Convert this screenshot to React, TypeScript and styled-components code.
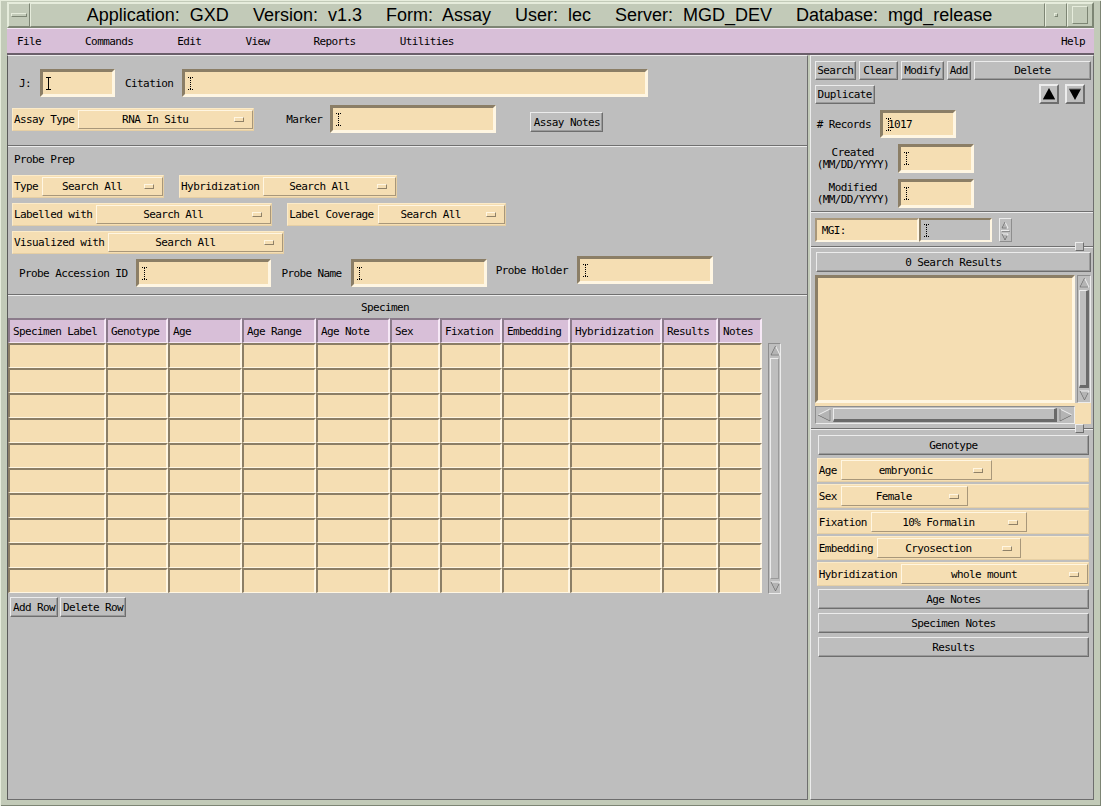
import styled, { createGlobalStyle } from 'styled-components';

// X11 / Motif palette
const C = {
  frame: '#c2cab8',
  frameLight: '#e6ecdc',
  frameDark: '#7d8574',
  gray: '#bebebe',
  grayLight: '#ececec',
  grayDark: '#6e6e6e',
  wheat: '#f5deb3',
  wheatLight: '#fff6e2',
  wheatDark: '#8b7e66',
  thistle: '#d8bfd8',
  thistleDark: '#8b7b8b',
  thistleLight: '#f6e8f6',
};

const GlobalStyle = createGlobalStyle`
  html, body { margin: 0; padding: 0; background: ${C.frame}; }
  body {
    font-family: "DejaVu Sans Mono", "Liberation Mono", monospace;
    font-size: 11px;
    letter-spacing: -0.6px;
    color: #000;
  }
  * { box-sizing: border-box; }
`;

const Window = styled.div`
  width: 1101px;
  height: 806px;
  padding: 2px 7px 6px;
  display: flex;
  flex-direction: column;
  background: ${C.frame};
  box-shadow: inset 1px 1px 0 ${C.frameLight}, inset -1px -1px 0 ${C.frameDark};
`;

/* ---------- title bar ---------- */
const TitleBar = styled.div`
  height: 26px;
  display: flex;
  border: 1px solid;
  border-color: ${C.frameLight} ${C.frameDark} ${C.frameDark} ${C.frameLight};
`;

const TitleButton = styled.div<{ $w: number }>`
  width: ${p => p.$w}px;
  display: flex;
  align-items: center;
  justify-content: center;
  border: 1px solid;
  border-color: ${C.frameLight} ${C.frameDark} ${C.frameDark} ${C.frameLight};
`;

const TitleText = styled.div`
  flex: 1;
  display: flex;
  align-items: center;
  justify-content: center;
  gap: 24px;
  padding-left: 4px;
  font-family: "Liberation Sans", Arial, sans-serif;
  font-size: 18px;
  letter-spacing: 0;
  white-space: pre;
  border: 1px solid;
  border-color: ${C.frameLight} ${C.frameDark} ${C.frameDark} ${C.frameLight};
`;

const MenuGlyph = styled.div`
  width: 16px;
  height: 4px;
  border: 1px solid;
  border-color: ${C.frameLight} ${C.frameDark} ${C.frameDark} ${C.frameLight};
`;

const MinGlyph = styled.div`
  width: 4px;
  height: 4px;
  border: 1px solid;
  border-color: ${C.frameLight} ${C.frameDark} ${C.frameDark} ${C.frameLight};
`;

const MaxGlyph = styled.div`
  width: 16px;
  height: 18px;
  border: 1px solid;
  border-color: ${C.frameLight} ${C.frameDark} ${C.frameDark} ${C.frameLight};
`;

/* ---------- menu bar ---------- */
const MenuBar = styled.div`
  height: 27px;
  display: flex;
  align-items: center;
  gap: 44px;
  padding: 1px 9px 0 10px;
  background: ${C.thistle};
  border-top: 1px solid ${C.thistleLight};
  border-bottom: 2px solid #6a5f6a;
`;

const MenuItem = styled.span<{ $right?: boolean }>`
  margin-left: ${p => (p.$right ? 'auto' : '0')};
`;

/* ---------- main panels ---------- */
const Main = styled.div`
  flex: 1;
  display: flex;
  gap: 2px;
`;

const LeftPanel = styled.div`
  width: 801px;
  display: flex;
  flex-direction: column;
  background: ${C.gray};
  border: 1px solid;
  border-color: ${C.grayLight} ${C.grayDark} ${C.grayDark} #5a5a5a;
`;

const RightPanel = styled.div`
  flex: 1;
  display: flex;
  flex-direction: column;
  background: ${C.gray};
  border: 1px solid;
  border-color: ${C.grayLight} ${C.grayDark} ${C.grayDark} ${C.grayLight};
`;

const Section = styled.div<{ $pad: string; $grow?: boolean }>`
  display: flex;
  flex-direction: column;
  padding: ${p => p.$pad};
  flex: ${p => (p.$grow ? 1 : 'none')};
`;

const Separator = styled.div`
  height: 2px;
  border-top: 1px solid #707070;
  border-bottom: 1px solid ${C.grayLight};
`;

const Sash = styled.div`
  position: relative;
  height: 2px;
  border-top: 1px solid #707070;
  border-bottom: 1px solid ${C.grayLight};
`;

const SashHandle = styled.div`
  position: absolute;
  right: 9px;
  top: -5px;
  width: 9px;
  height: 9px;
  background: ${C.gray};
  border: 1px solid;
  border-color: ${C.grayLight} ${C.grayDark} ${C.grayDark} ${C.grayLight};
`;

const Row = styled.div<{ $mt?: number; $h?: number; $pl?: number; $align?: string }>`
  display: flex;
  align-items: ${p => p.$align ?? 'center'};
  margin-top: ${p => p.$mt ?? 0}px;
  height: ${p => (p.$h ? `${p.$h}px` : 'auto')};
  padding-left: ${p => p.$pl ?? 0}px;
`;

const Label = styled.span<{ $ml?: number; $mr?: number; $w?: number }>`
  margin-left: ${p => p.$ml ?? 0}px;
  margin-right: ${p => p.$mr ?? 0}px;
  width: ${p => (p.$w ? `${p.$w}px` : 'auto')};
  white-space: pre;
  flex: none;
`;

const StackLabel = styled.div`
  width: 72px;
  margin: 0 9px 0 2px;
  text-align: center;
  line-height: 12px;
`;

const Caption = styled.div<{ $center?: boolean; $ml?: number }>`
  height: 12px;
  line-height: 12px;
  margin-left: ${p => p.$ml ?? 0}px;
  text-align: ${p => (p.$center ? 'center' : 'left')};
`;

/* ---------- text fields ---------- */
const Field = styled.div<{ $w: number; $h?: number; $gray?: boolean; $bw?: number }>`
  width: ${p => p.$w}px;
  height: ${p => p.$h ?? 28}px;
  flex: none;
  display: flex;
  align-items: center;
  padding-left: 3px;
  background: ${p => (p.$gray ? C.gray : C.wheat)};
  border: ${p => p.$bw ?? 3}px solid;
  border-color: ${C.wheatDark} ${C.wheatLight} ${C.wheatLight} ${C.wheatDark};
`;

const FieldText = styled.span`
  margin-left: -3px;
`;

const IBeam = ({ dotted }: { dotted?: boolean }) => (
  <svg width="5" height="13" viewBox="0 0 5 13" style={{ flex: 'none' }}>
    <path d="M0 0.5H5M0 12.5H5" stroke="#000" strokeWidth="1" strokeDasharray={dotted ? '1 1' : undefined} />
    <path d="M2.5 1V12" stroke="#000" strokeWidth="1" strokeDasharray={dotted ? '1 1' : undefined} />
  </svg>
);

/* ---------- push buttons ---------- */
const Button = styled.div<{ $w?: number; $h?: number; $fill?: boolean }>`
  width: ${p => (p.$w ? `${p.$w}px` : 'auto')};
  height: ${p => p.$h ?? 20}px;
  flex: ${p => (p.$fill ? 1 : 'none')};
  display: flex;
  align-items: center;
  justify-content: center;
  padding: 0 2px;
  white-space: pre;
  background: ${C.gray};
  border: 1px solid;
  border-color: ${C.grayLight} ${C.grayDark} ${C.grayDark} ${C.grayLight};
  box-shadow: inset -1px -1px 0 #9a9a9a;
`;

const ArrowButton = styled.div<{ $ml?: number }>`
  width: 20px;
  height: 20px;
  margin-left: ${p => p.$ml ?? 0}px;
  display: flex;
  align-items: center;
  justify-content: center;
  background: ${C.gray};
  border: 2px solid;
  border-color: ${C.grayLight} ${C.grayDark} ${C.grayDark} ${C.grayLight};
`;

const Triangle = ({ down }: { down?: boolean }) => (
  <svg width="12" height="12" viewBox="0 0 12 12">
    {down ? (
      <>
        <polygon points="0,1 12,1 6,12" fill="#000" />
        <path d="M0 1H12" stroke="#6e6e6e" />
      </>
    ) : (
      <>
        <polygon points="6,0 12,11 0,11" fill="#000" />
        <path d="M0 11.5H12" stroke="#6e6e6e" />
      </>
    )}
  </svg>
);

/* ---------- option menus ---------- */
const OptionBox = styled.div<{ $h?: number; $fill?: boolean }>`
  display: flex;
  align-items: center;
  flex: none;
  width: ${p => (p.$fill ? '100%' : 'auto')};
  height: ${p => p.$h ?? 23}px;
  background: ${C.wheat};
  border: 1px solid;
  border-color: #fcebc8 #e6cfa4 #e6cfa4 #fcebc8;
`;

const OptionLabel = styled.span`
  padding: 0 4px 0 1px;
  white-space: pre;
`;

const OptionButton = styled.div<{ $w: number }>`
  width: ${p => p.$w}px;
  height: calc(100% - 2px);
  display: flex;
  align-items: center;
  background: ${C.wheat};
  border: 1px solid;
  border-color: ${C.wheatLight} #a8977a #a8977a ${C.wheatLight};
`;

const OptionValue = styled.span`
  flex: 1;
  text-align: center;
  white-space: pre;
`;

const Indicator = styled.span`
  width: 10px;
  height: 5px;
  margin: 0 8px 0 3px;
  border: 1px solid;
  border-color: ${C.wheatLight} #8f8168 #8f8168 ${C.wheatLight};
`;

const OptionMenu = ({ label, value, w, h, fill }: { label: string; value: string; w: number; h?: number; fill?: boolean }) => (
  <OptionBox $h={h} $fill={fill}>
    <OptionLabel>{label}</OptionLabel>
    <OptionButton $w={w}>
      <OptionValue>{value}</OptionValue>
      <Indicator />
    </OptionButton>
  </OptionBox>
);

/* ---------- specimen table ---------- */
const columns: [string, number][] = [
  ['Specimen Label', 98],
  ['Genotype', 62],
  ['Age', 74],
  ['Age Range', 74],
  ['Age Note', 74],
  ['Sex', 50],
  ['Fixation', 62],
  ['Embedding', 68],
  ['Hybridization', 92],
  ['Results', 56],
  ['Notes', 44],
];

const TableWrap = styled.div`
  display: flex;
  align-items: flex-start;
`;

const Grid = styled.div`
  display: grid;
  grid-template-columns: ${columns.map(c => `${c[1]}px`).join(' ')};
  grid-template-rows: 25px;
  grid-auto-rows: 25px;
  margin-top: 5px;
`;

const HeadCell = styled.div`
  display: flex;
  align-items: center;
  padding-left: 3px;
  background: ${C.thistle};
  white-space: pre;
  border-style: solid;
  border-width: 2px 2px 1px 2px;
  border-color: ${C.thistleDark} ${C.thistleLight} ${C.thistleLight} ${C.thistleDark};
`;

const BodyCell = styled.div`
  background: ${C.wheat};
  border-style: solid;
  border-width: 2px 2px 1px 2px;
  border-color: ${C.wheatDark} ${C.wheatLight} ${C.wheatLight} ${C.wheatDark};
`;

const VScroll = styled.div<{ $h: number; $w?: number; $mt?: number; $ml?: number }>`
  width: ${p => p.$w ?? 13}px;
  height: ${p => p.$h}px;
  margin-top: ${p => p.$mt ?? 0}px;
  margin-left: ${p => p.$ml ?? 0}px;
  display: flex;
  flex-direction: column;
  background: ${C.gray};
  border: 1px solid;
  border-color: #8e8e8e ${C.grayLight} ${C.grayLight} #8e8e8e;
`;

const HScroll = styled.div`
  height: 18px;
  display: flex;
  background: ${C.gray};
  border: 1px solid;
  border-color: #8e8e8e ${C.grayLight} ${C.grayLight} #8e8e8e;
`;

const Thumb = styled.div<{ $dark?: boolean }>`
  flex: 1;
  margin: 1px;
  background: ${C.gray};
  border: 1px solid;
  border-color: ${C.grayLight} ${p => (p.$dark ? '#6a6a6a' : '#9a9a9a')} ${p => (p.$dark ? '#6a6a6a' : '#9a9a9a')} ${C.grayLight};
  border-width: ${p => (p.$dark ? '1px 3px 3px 1px' : '1px')};
`;

const ScrollArrow = ({ dir, size = 11 }: { dir: 'up' | 'down' | 'left' | 'right'; size?: number }) => {
  const s = size;
  const pts = {
    up: `${s / 2},1 ${s - 1},${s - 1} 1,${s - 1}`,
    down: `1,1 ${s - 1},1 ${s / 2},${s - 1}`,
    left: `1,${s / 2} ${s - 1},1 ${s - 1},${s - 1}`,
    right: `1,1 ${s - 1},${s / 2} 1,${s - 1}`,
  }[dir];
  return (
    <svg width={s} height={s} viewBox={`0 0 ${s} ${s}`} style={{ flex: 'none', margin: 1 }}>
      <polygon points={pts} fill="#b4b4b4" stroke="#f0f0f0" strokeWidth="1" />
      <polygon points={pts} fill="none" stroke="#6e6e6e" strokeWidth="1" strokeDasharray={`0 ${s} ${s * 2}`} />
    </svg>
  );
};

/* ---------- right panel parts ---------- */
const MgiLabel = styled.div`
  width: 104px;
  height: 24px;
  display: flex;
  align-items: center;
  padding-left: 5px;
  background: ${C.wheat};
  border: 2px solid;
  border-color: #a8977a ${C.wheatLight} ${C.wheatLight} #a8977a;
`;

const Spin = styled.div`
  width: 13px;
  height: 24px;
  margin-left: 7px;
  display: flex;
  flex-direction: column;
  align-items: center;
  justify-content: space-between;
  padding: 1px 0;
  border: 1px solid;
  border-color: ${C.grayLight} #8e8e8e #8e8e8e ${C.grayLight};
`;

const SpinBar = styled.div`
  width: 9px;
  height: 3px;
  border: 1px solid;
  border-color: ${C.grayLight} #8e8e8e #8e8e8e ${C.grayLight};
`;

const ListGrid = styled.div`
  display: grid;
  grid-template-columns: 260px 16px;
  grid-template-rows: 128px 3px 18px;
  margin-top: 3px;
  background: ${C.gray};
`;

const ListBox = styled.div`
  background: ${C.wheat};
  border: 3px solid;
  border-color: ${C.wheatDark} ${C.wheatLight} ${C.wheatLight} ${C.wheatDark};
`;

const WheatStrip = styled.div`
  grid-column: 1 / 2;
  background: ${C.wheat};
`;

const Corner = styled.div`
  grid-row: 2 / 4;
  grid-column: 2;
  background: ${C.wheat};
`;

const TallFill = styled.div`
  grid-row: 1 / 3;
  grid-column: 2;
  padding-left: 2px;
`;

const Stack = styled.div<{ $gap: number; $mt?: number }>`
  display: flex;
  flex-direction: column;
  gap: ${p => p.$gap}px;
  margin-top: ${p => p.$mt ?? 0}px;
`;

const ButtonRow = styled.div<{ $gap: number; $mt?: number; $pl?: number }>`
  display: flex;
  gap: ${p => p.$gap}px;
  margin-top: ${p => p.$mt ?? 0}px;
  padding-left: ${p => p.$pl ?? 0}px;
`;

export default function App() {
  const rows = Array.from({ length: 10 });
  return (
    <>
      <GlobalStyle />
      <Window>
        <TitleBar>
          <TitleButton $w={22}>
            <MenuGlyph />
          </TitleButton>
          <TitleText>
            <span>Application:  GXD</span>
            <span>Version:  v1.3</span>
            <span>Form:  Assay</span>
            <span>User:  lec</span>
            <span>Server:  MGD_DEV</span>
            <span>Database:  mgd_release</span>
          </TitleText>
          <TitleButton $w={22}>
            <MinGlyph />
          </TitleButton>
          <TitleButton $w={26}>
            <MaxGlyph />
          </TitleButton>
        </TitleBar>

        <MenuBar>
          <MenuItem>File</MenuItem>
          <MenuItem>Commands</MenuItem>
          <MenuItem>Edit</MenuItem>
          <MenuItem>View</MenuItem>
          <MenuItem>Reports</MenuItem>
          <MenuItem>Utilities</MenuItem>
          <MenuItem $right>Help</MenuItem>
        </MenuBar>

        <Main>
          <LeftPanel>
            <Section $pad="13px 0 12px 4px">
              <Row $h={28}>
                <Label $ml={7} $mr={9}>J:</Label>
                <Field $w={75}>
                  <IBeam />
                </Field>
                <Label $ml={10} $mr={9}>Citation</Label>
                <Field $w={466}>
                  <IBeam dotted />
                </Field>
              </Row>
              <Row $h={28} $mt={8}>
                <OptionMenu label="Assay Type" value="RNA In Situ" w={175} />
                <Label $ml={32} $mr={8}>Marker</Label>
                <Field $w={166}>
                  <IBeam dotted />
                </Field>
                <Button $w={73} $h={20} style={{ marginLeft: 34, alignSelf: 'flex-end', marginBottom: 1 }}>
                  Assay Notes
                </Button>
              </Row>
            </Section>
            <Separator />

            <Section $pad="7px 0 7px 4px">
              <Caption $ml={2}>Probe Prep</Caption>
              <Row $mt={9}>
                <OptionMenu label="Type" value="Search All" w={121} />
                <Label $w={15} />
                <OptionMenu label="Hybridization" value="Search All" w={133} />
              </Row>
              <Row $mt={5}>
                <OptionMenu label="Labelled with" value="Search All" w={175} />
                <Label $w={15} />
                <OptionMenu label="Label Coverage" value="Search All" w={127} />
              </Row>
              <Row $mt={5}>
                <OptionMenu label="Visualized with" value="Search All" w={175} />
              </Row>
              <Row $mt={5} $h={28} $align="flex-end">
                <Row $h={28}>
                  <Label $ml={7} $mr={9}>Probe Accession ID</Label>
                  <Field $w={135}>
                    <IBeam dotted />
                  </Field>
                  <Label $ml={10} $mr={9}>Probe Name</Label>
                  <Field $w={136}>
                    <IBeam dotted />
                  </Field>
                </Row>
                <Row $h={28} style={{ marginBottom: 3 }}>
                  <Label $ml={9} $mr={9}>Probe Holder</Label>
                  <Field $w={136}>
                    <IBeam dotted />
                  </Field>
                </Row>
              </Row>
            </Section>
            <Separator />

            <Section $pad="6px 0 0 0" $grow>
              <TableWrap>
                <div>
                  <Caption $center>Specimen</Caption>
                  <Grid style={{ marginTop: 4 }}>
                    {columns.map(([name]) => (
                      <HeadCell key={name}>{name}</HeadCell>
                    ))}
                    {rows.map((_, r) =>
                      columns.map(([name]) => <BodyCell key={`${r}-${name}`} />)
                    )}
                  </Grid>
                </div>
                <VScroll $h={251} $mt={41} $ml={6}>
                  <ScrollArrow dir="up" />
                  <Thumb />
                  <ScrollArrow dir="down" />
                </VScroll>
              </TableWrap>
              <ButtonRow $gap={2} $mt={3} $pl={2}>
                <Button $w={48}>Add Row</Button>
                <Button $w={66}>Delete Row</Button>
              </ButtonRow>
            </Section>
          </LeftPanel>

          <RightPanel>
            <Section $pad="5px 2px 3px 4px">
              <ButtonRow $gap={3}>
                <Button $w={41} $h={19}>Search</Button>
                <Button $w={39} $h={19}>Clear</Button>
                <Button $w={43} $h={19}>Modify</Button>
                <Button $w={24} $h={19}>Add</Button>
                <Button $fill $h={19}>Delete</Button>
              </ButtonRow>
              <Row $mt={4} $h={20}>
                <Button $w={60} $h={19}>Duplicate</Button>
                <ArrowButton $ml={164}>
                  <Triangle />
                </ArrowButton>
                <ArrowButton $ml={6}>
                  <Triangle down />
                </ArrowButton>
              </Row>
              <Row $mt={6} $h={28}>
                <Label $ml={2} $mr={9}># Records</Label>
                <Field $w={76}>
                  <IBeam dotted />
                  <FieldText>1017</FieldText>
                </Field>
              </Row>
              <Row $mt={6} $h={29}>
                <StackLabel>
                  Created
                  <br />
                  (MM/DD/YYYY)
                </StackLabel>
                <Field $w={76} $h={29}>
                  <IBeam dotted />
                </Field>
              </Row>
              <Row $mt={6} $h={29}>
                <StackLabel>
                  Modified
                  <br />
                  (MM/DD/YYYY)
                </StackLabel>
                <Field $w={76} $h={29}>
                  <IBeam dotted />
                </Field>
              </Row>
            </Section>
            <Separator />

            <Section $pad="5px 0 4px 4px">
              <Row $h={24}>
                <MgiLabel>MGI:</MgiLabel>
                <Field $w={73} $h={24} $gray $bw={2}>
                  <IBeam dotted />
                </Field>
                <Spin>
                  <ScrollArrow dir="up" size={8} />
                  <SpinBar />
                  <ScrollArrow dir="down" size={8} />
                </Spin>
              </Row>
            </Section>
            <Sash>
              <SashHandle />
            </Sash>

            <Section $pad="4px 2px 4px 4px">
              <Button $h={20} style={{ marginLeft: 1 }}>0 Search Results</Button>
              <ListGrid>
                <ListBox />
                <TallFill>
                  <VScroll $h={128} $w={14}>
                    <ScrollArrow dir="up" />
                    <Thumb $dark />
                    <ScrollArrow dir="down" />
                  </VScroll>
                </TallFill>
                <WheatStrip />
                <HScroll>
                  <ScrollArrow dir="left" size={14} />
                  <Thumb $dark />
                  <ScrollArrow dir="right" size={14} />
                </HScroll>
                <Corner />
              </ListGrid>
            </Section>
            <Sash>
              <SashHandle />
            </Sash>

            <Section $pad="5px 4px 0 6px" $grow>
              <Button $h={20} style={{ marginLeft: 1 }}>Genotype</Button>
              <Stack $gap={2} $mt={3}>
                <OptionMenu label="Age" value="embryonic" w={151} h={24} fill />
                <OptionMenu label="Sex" value="Female" w={127} h={24} fill />
                <OptionMenu label="Fixation" value="10% Formalin" w={156} h={24} fill />
                <OptionMenu label="Embedding" value="Cryosection" w={144} h={24} fill />
                <OptionMenu label="Hybridization" value="whole mount" w={187} h={24} fill />
              </Stack>
              <Stack $gap={4} $mt={3}>
                <Button $h={20} style={{ marginLeft: 1 }}>Age Notes</Button>
                <Button $h={20} style={{ marginLeft: 1 }}>Specimen Notes</Button>
                <Button $h={20} style={{ marginLeft: 1 }}>Results</Button>
              </Stack>
            </Section>
          </RightPanel>
        </Main>
      </Window>
    </>
  );
}
